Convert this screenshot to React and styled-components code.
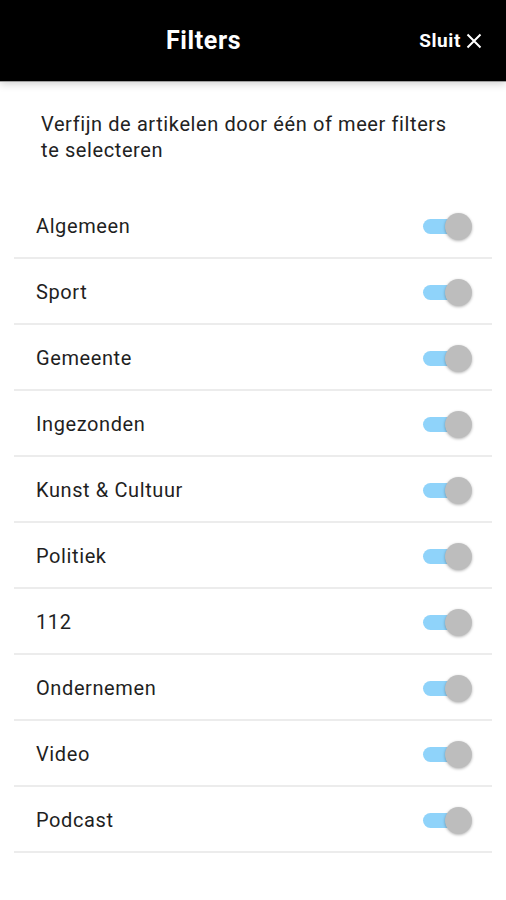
import React from 'react'
import styled, { createGlobalStyle } from 'styled-components'

const GlobalStyle = createGlobalStyle`
  body {
    margin: 0;
    background: #ffffff;
    font-family: Roboto, "Noto Sans", Arial, sans-serif;
  }
`

const Page = styled.div`
  width: 506px;
  min-height: 900px;
  background: #ffffff;
`

const Header = styled.header`
  height: 81px;
  background: #000000;
  display: flex;
  align-items: center;
  padding-right: 24px;
  box-shadow: 0 1px 0 #9e9e9e, 0 3px 8px rgba(0, 0, 0, 0.18);
`

const Title = styled.h1`
  flex: 1;
  margin: 0;
  padding-left: 2px;
  text-align: center;
  color: #ffffff;
  font-size: 25px;
  font-weight: 700;
  letter-spacing: 0.6px;
`

const Close = styled.button`
  display: flex;
  align-items: center;
  gap: 5px;
  margin-left: 14px;
  background: none;
  border: none;
  padding: 0;
  color: #ffffff;
  font-family: Roboto, Arial, sans-serif;
  font-size: 19px;
  font-weight: 700;
  letter-spacing: 0.6px;
`

const Intro = styled.p`
  margin: 0;
  padding: 30px 41px 30px 41px;
  font-size: 20px;
  line-height: 26px;
  letter-spacing: 0.6px;
  color: #222222;
`

const List = styled.ul`
  list-style: none;
  margin: 0 14px;
  padding: 0;
`

const Row = styled.li`
  height: 66px;
  display: flex;
  align-items: center;
  justify-content: space-between;
  padding: 2px 34px 0 22px;
  border-bottom: 2px solid #ececec;
  box-sizing: border-box;
`

const Label = styled.span`
  font-size: 20px;
  letter-spacing: 0.6px;
  color: #1f1f1f;
`

const Toggle = styled.span`
  position: relative;
  width: 43px;
  height: 15px;
  border-radius: 8px;
  background: ${p => (p.$on ? '#8fd3fa' : '#d0d0d0')};
  margin-right: -8px;
`

const Thumb = styled.span`
  position: absolute;
  top: 50%;
  left: ${p => (p.$on ? '22px' : '-6px')};
  width: 27px;
  height: 27px;
  margin-top: -13.5px;
  border-radius: 50%;
  background: #bdbdbd;
  box-shadow: 0 1px 3px rgba(0, 0, 0, 0.3);
`

const filters = [
  'Algemeen',
  'Sport',
  'Gemeente',
  'Ingezonden',
  'Kunst & Cultuur',
  'Politiek',
  '112',
  'Ondernemen',
  'Video',
  'Podcast',
]

const CloseIcon = () => (
  <svg width="16" height="16" viewBox="0 0 16 16">
    <path d="M1.5 1.5 L14.5 14.5 M14.5 1.5 L1.5 14.5" stroke="#fff" strokeWidth="2" />
  </svg>
)

const App = () => {
  return (
    <Page>
      <GlobalStyle />
      <Header>
        <Title>Filters</Title>
        <Close>
          Sluit <CloseIcon />
        </Close>
      </Header>
      <Intro>Verfijn de artikelen door één of meer filters te selecteren</Intro>
      <List>
        {filters.map(name => (
          <Row key={name}>
            <Label>{name}</Label>
            <Toggle $on>
              <Thumb $on />
            </Toggle>
          </Row>
        ))}
      </List>
    </Page>
  )
}

export default App
